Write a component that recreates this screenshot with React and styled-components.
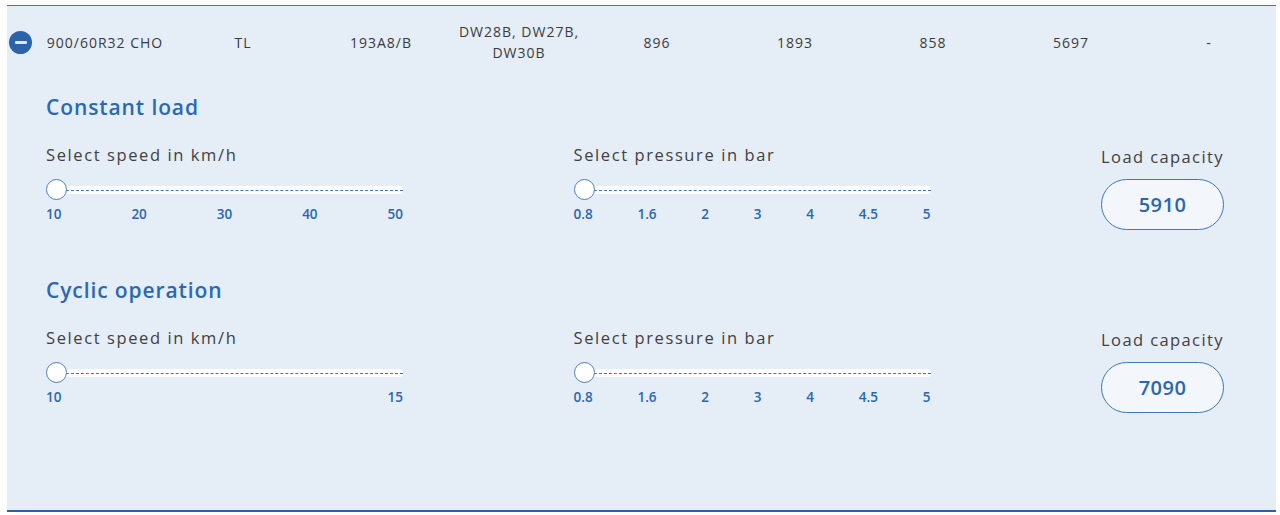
import React from "react";
import styled, { createGlobalStyle } from "styled-components";

const GlobalStyle = createGlobalStyle`
  body{
    margin:0;
    background:#ffffff;
    font-family:"Open Sans","Noto Sans",sans-serif;
  }
`;

const tyre = ["900/60R32 CHO", "TL", "193A8/B", "DW28B, DW27B, DW30B", "896", "1893", "858", "5697", "-"];

const sections = [
  { title: "Constant load", speeds: [10, 20, 30, 40, 50], capacity: 5910 },
  { title: "Cyclic operation", speeds: [10, 15], capacity: 7090 },
];

const pressures = ["0.8", "1.6", "2", "3", "4", "4.5", "5"];

export default function App() {
  return (
    <>
      <GlobalStyle />
      <Panel>
        <Row>
          <Toggle>
            <span />
          </Toggle>
          {tyre.map((cell, i) => (
            <Cell key={i}>
              {cell === "DW28B, DW27B, DW30B" ? (
                <>
                  DW28B, DW27B,
                  <br />
                  DW30B
                </>
              ) : (
                cell
              )}
            </Cell>
          ))}
        </Row>
        {sections.map((s) => (
          <Section key={s.title}>
            <Title>{s.title}</Title>
            <Controls>
              <SliderBlock label="Select speed in km/h" ticks={s.speeds} />
              <SliderBlock label="Select pressure in bar" ticks={pressures} />
              <Capacity>
                <CapLabel>Load capacity</CapLabel>
                <Pill>{s.capacity}</Pill>
              </Capacity>
            </Controls>
          </Section>
        ))}
      </Panel>
    </>
  );
}

function SliderBlock({ label, ticks }) {
  return (
    <div>
      <Label>{label}</Label>
      <Slider>
        <Track />
        <Thumb />
      </Slider>
      <Ticks>
        {ticks.map((t) => (
          <span key={t}>{t}</span>
        ))}
      </Ticks>
    </div>
  );
}

const Panel = styled.div`
  margin:5px 4px 0 7px;
  height:507px;
  box-sizing:border-box;
  background:#e5edf7;
  border-top:1px solid #3a76c2;
  border-bottom:2px solid #2d62a5;
`;

const Row = styled.div`
  display:grid;
  grid-template-columns:29px repeat(9,138px);
  align-items:center;
  height:72px;
  font-size:14px;
  letter-spacing:1px;
  color:#3b3b3b;
`;

const Toggle = styled.div`
  width:23px;
  height:23px;
  margin-left:2px;
  border-radius:50%;
  background:#2c63a7;
  display:flex;
  align-items:center;
  justify-content:center;
  span{
    width:12px;
    height:3px;
    border-radius:1px;
    background:#dfe7f2;
  }
`;

const Cell = styled.div`
  text-align:center;
  line-height:21px;
  white-space:nowrap;
`;

const Section = styled.div`
  padding:15px 52px 0 39px;
  & + &{
    padding-top:46px;
  }
`;

const Title = styled.div`
  font-size:21px;
  line-height:28px;
  font-weight:600;
  letter-spacing:0.9px;
  color:#2a69b2;
`;

const Controls = styled.div`
  display:grid;
  grid-template-columns:357px 357px 123px;
  justify-content:space-between;
  margin-top:22px;
`;

const Label = styled.div`
  font-size:16.5px;
  line-height:24px;
  letter-spacing:1.6px;
  color:#414141;
  white-space:nowrap;
`;

const Slider = styled.div`
  position:relative;
  height:22px;
  margin-top:12px;
  display:flex;
  align-items:center;
`;

const Track = styled.div`
  flex:1;
  margin-left:10px;
  height:8px;
  border-radius:4px;
  background:#ffffff;
  display:flex;
  align-items:center;
  &::after{
    content:"";
    flex:1;
    border-top:1px dashed #3f78b9;
  }
`;

const Thumb = styled.div`
  position:absolute;
  left:0;
  top:0;
  width:19px;
  height:19px;
  border-radius:50%;
  background:#ffffff;
  border:1.5px solid #4f7fb9;
`;

const Ticks = styled.div`
  display:flex;
  justify-content:space-between;
  margin-top:4px;
  font-size:13.5px;
  line-height:18px;
  font-weight:600;
  color:#2a67b0;
`;

const Capacity = styled.div`
  display:flex;
  flex-direction:column;
  align-items:center;
  padding-top:2px;
`;

const CapLabel = styled.div`
  font-size:16.5px;
  line-height:24px;
  letter-spacing:1.4px;
  color:#414141;
  white-space:nowrap;
`;

const Pill = styled.div`
  margin-top:10px;
  width:123px;
  height:51px;
  box-sizing:border-box;
  border:1px solid #3f78b9;
  border-radius:26px;
  background:#f3f6fa;
  display:flex;
  align-items:center;
  justify-content:center;
  font-size:20px;
  font-weight:600;
  letter-spacing:0.5px;
  color:#2a67b0;
`;
